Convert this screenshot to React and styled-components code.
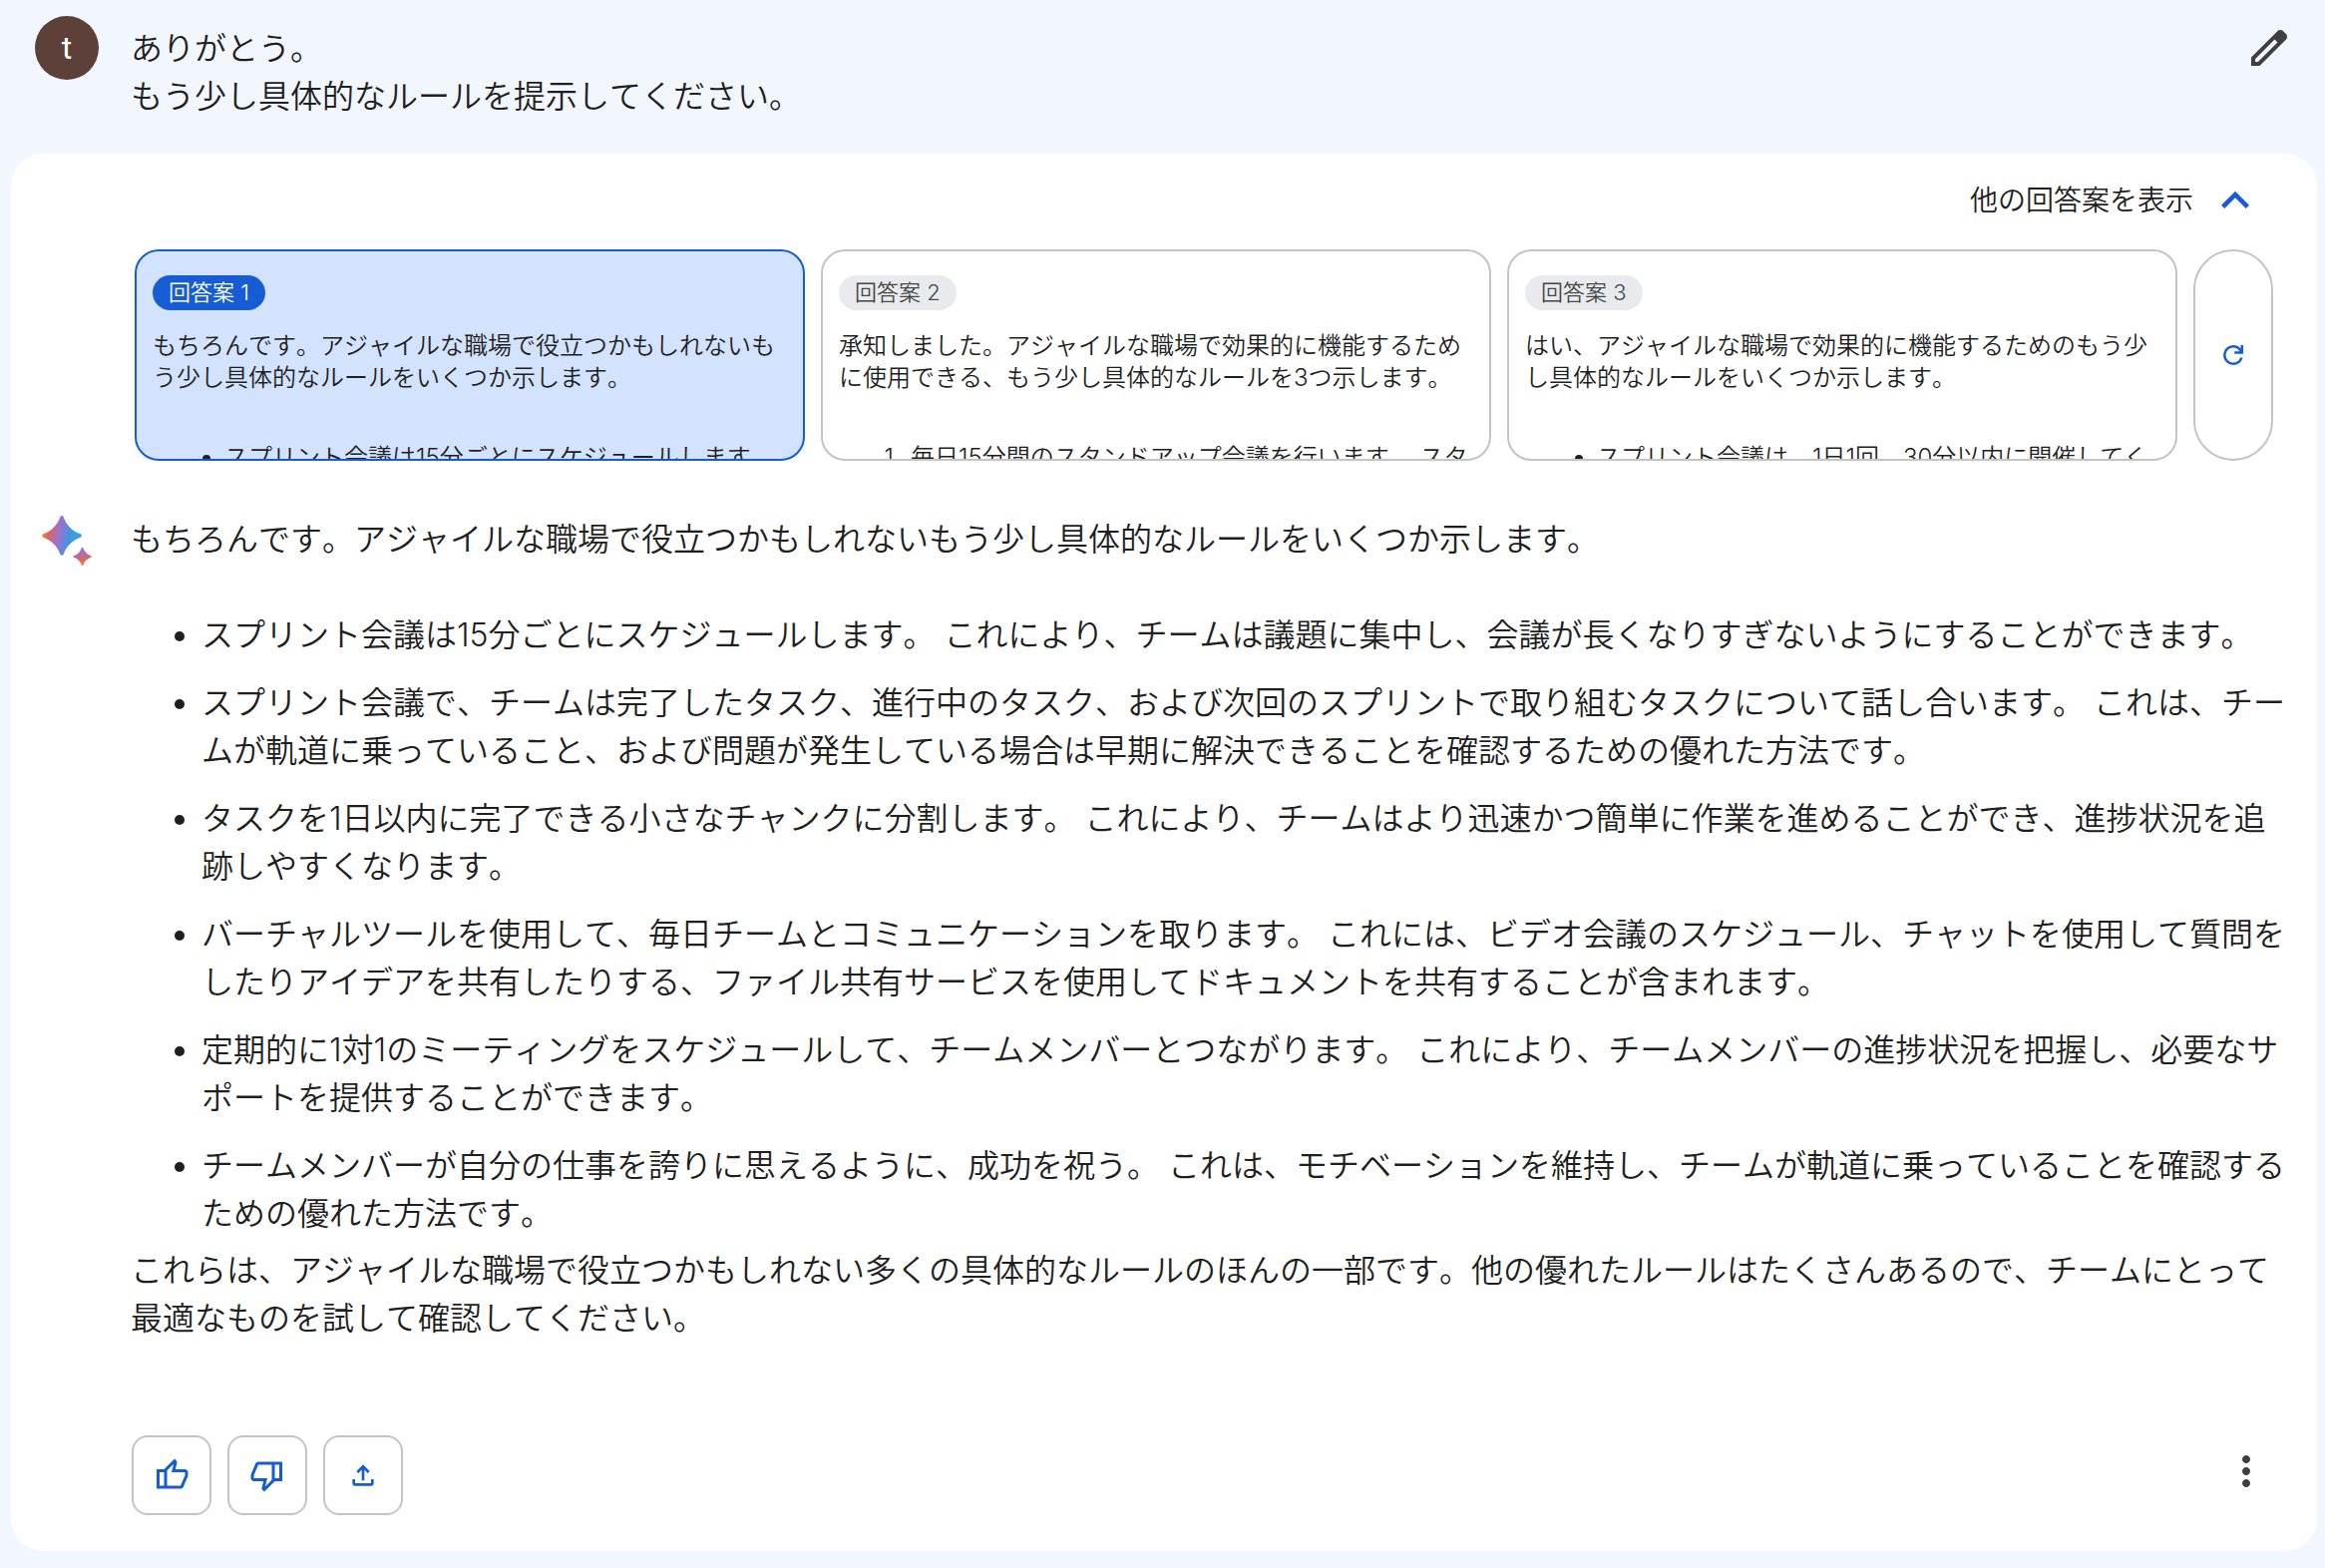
import { useState } from "react";
import styled, { createGlobalStyle } from "styled-components";

const drafts = [
  {
    id: 1,
    text: "もちろんです。アジャイルな職場で役立つかもしれないもう少し具体的なルールをいくつか示します。",
    item: "スプリント会議は15分ごとにスケジュールします。",
    marker: "disc"
  },
  {
    id: 2,
    text: "承知しました。アジャイルな職場で効果的に機能するために使用できる、もう少し具体的なルールを3つ示します。",
    item: "毎日15分間のスタンドアップ会議を行います。 スタンドアップ会議では進捗を共有します。",
    marker: "decimal"
  },
  {
    id: 3,
    text: "はい、アジャイルな職場で効果的に機能するためのもう少し具体的なルールをいくつか示します。",
    item: "スプリント会議は、1日1回、30分以内に開催してください。",
    marker: "disc"
  }
];

const rules = [
  "スプリント会議は15分ごとにスケジュールします。 これにより、チームは議題に集中し、会議が長くなりすぎないようにすることができます。",
  "スプリント会議で、チームは完了したタスク、進行中のタスク、および次回のスプリントで取り組むタスクについて話し合います。 これは、チームが軌道に乗っていること、および問題が発生している場合は早期に解決できることを確認するための優れた方法です。",
  "タスクを1日以内に完了できる小さなチャンクに分割します。 これにより、チームはより迅速かつ簡単に作業を進めることができ、進捗状況を追跡しやすくなります。",
  "バーチャルツールを使用して、毎日チームとコミュニケーションを取ります。 これには、ビデオ会議のスケジュール、チャットを使用して質問をしたりアイデアを共有したりする、ファイル共有サービスを使用してドキュメントを共有することが含まれます。",
  "定期的に1対1のミーティングをスケジュールして、チームメンバーとつながります。 これにより、チームメンバーの進捗状況を把握し、必要なサポートを提供することができます。",
  "チームメンバーが自分の仕事を誇りに思えるように、成功を祝う。 これは、モチベーションを維持し、チームが軌道に乗っていることを確認するための優れた方法です。"
];

const icons = {
  edit: "M200-200h57l391-391-57-57-391 391v57Zm-80 80v-170l528-527q12-11 26.5-17t30.5-6q16 0 31 6t26 18l55 56q12 11 17.5 26t5.5 30q0 16-5.5 30.5T817-647L290-120H120Z",
  up: "M480-528 296-344l-56-56 240-240 240 240-56 56-184-184Z",
  refresh: "M480-160q-134 0-227-93t-93-227q0-134 93-227t227-93q69 0 132 28.5T720-690v-110h80v280H520v-80h168q-32-56-87.5-88T480-720q-100 0-170 70t-70 170q0 100 70 170t170 70q77 0 139-44t87-116h84q-28 106-114 173t-196 67Z",
  like: "M720-120H280v-520l280-280 50 50q7 7 11.5 19t4.5 23v14l-44 174h258q32 0 56 24t24 56v80q0 7-2 15t-4 15L794-168q-9 20-30 34t-44 14Zm-360-80h360l120-280v-80H480l54-220-174 174v406Zm-80-440v80H160v360h120v80H80v-520h200Z",
  dislike: "M240-840h440v520L400-40l-50-50q-7-7-11.5-19t-4.5-23v-14l44-174H120q-32 0-56-24t-24-56v-80q0-7 2-15t4-15l120-282q9-20 30-34t44-14Zm360 80H240L120-480v80h360l-54 220 174-174v-406Zm80 440v-80h120v-360H680v-80h200v520H680Z",
  share: "M440-320v-326L336-542l-56-58 200-200 200 200-56 58-104-104v326h-80ZM240-160q-33 0-56.5-23.5T160-240v-120h80v120h480v-120h80v120q0 33-23.5 56.5T720-160H240Z",
  more: "M480-160q-33 0-56.5-23.5T400-240q0-33 23.5-56.5T480-320q33 0 56.5 23.5T560-240q0 33-23.5 56.5T480-160Zm0-240q-33 0-56.5-23.5T400-480q0-33 23.5-56.5T480-560q33 0 56.5 23.5T560-480q0 33-23.5 56.5T480-400Zm0-240q-33 0-56.5-23.5T400-720q0-33 23.5-56.5T480-800q33 0 56.5 23.5T560-720q0 33-23.5 56.5T480-640Z"
};

const star =
  "M18.3 1.2Q20-1 21.7 1.2C24.5 9.5 30.5 15.5 38.8 18.3Q41 20 38.8 21.7C30.5 24.5 24.5 30.5 21.7 38.8Q20 41 18.3 38.8C15.5 30.5 9.5 24.5 1.2 21.7Q-1 20 1.2 18.3C9.5 15.5 15.5 9.5 18.3 1.2Z";

function Icon({ name, size }) {
  return (
    <svg width={size} height={size} viewBox="0 -960 960 960" fill="currentColor" aria-hidden="true">
      <path d={icons[name]} />
    </svg>
  );
}

function Sparkle() {
  return (
    <svg width="50" height="50" viewBox="0 0 50 50" aria-hidden="true">
      <defs>
        <linearGradient id="big" x1="0" y1="0.42" x2="1" y2="0.58">
          <stop offset="0" stopColor="#f2903f" />
          <stop offset="0.16" stopColor="#dc6660" />
          <stop offset="0.42" stopColor="#9a72cc" />
          <stop offset="0.7" stopColor="#3f97e2" />
          <stop offset="1" stopColor="#35a3ea" />
        </linearGradient>
        <linearGradient id="small" x1="0.4" y1="0" x2="0.6" y2="1">
          <stop offset="0" stopColor="#8a78d8" />
          <stop offset="0.35" stopColor="#a96fb8" />
          <stop offset="0.65" stopColor="#dc6660" />
          <stop offset="1" stopColor="#f2903f" />
        </linearGradient>
      </defs>
      <path fill="url(#big)" d={star} />
      <path fill="url(#small)" d={star} transform="translate(31.4 31.8) scale(0.46)" />
    </svg>
  );
}

function App() {
  const [selected, setSelected] = useState(1);
  const [open, setOpen] = useState(true);

  return (
    <Page lang="ja">
      <GlobalStyle />
      <Query>
        <Avatar>t</Avatar>
        <QueryText>
          ありがとう。
          <br />
          もう少し具体的なルールを提示してください。
        </QueryText>
        <IconButton aria-label="テキストを編集">
          <Icon name="edit" size={48} />
        </IconButton>
      </Query>

      <Response>
        <DraftsHeader>
          <Toggle aria-expanded={open} onClick={() => setOpen(!open)}>
            他の回答案を表示
            <Icon name="up" size={56} />
          </Toggle>
        </DraftsHeader>

        {open && (
          <Drafts>
            {drafts.map((d) => (
              <Draft key={d.id} $active={d.id === selected} onClick={() => setSelected(d.id)}>
                <Chip $active={d.id === selected}>{`回答案 ${d.id}`}</Chip>
                <DraftText>{d.text}</DraftText>
                <DraftItem $marker={d.marker}>{d.item}</DraftItem>
              </Draft>
            ))}
            <Refresh aria-label="回答案を再生成">
              <Icon name="refresh" size={30} />
            </Refresh>
          </Drafts>
        )}

        <Answer>
          <Sparkle />
          <AnswerBody>
            <p>もちろんです。アジャイルな職場で役立つかもしれないもう少し具体的なルールをいくつか示します。</p>
            <Rules>
              {rules.map((r) => (
                <li key={r}>{r}</li>
              ))}
            </Rules>
            <p>これらは、アジャイルな職場で役立つかもしれない多くの具体的なルールのほんの一部です。他の優れたルールはたくさんあるので、チームにとって最適なものを試して確認してください。</p>
          </AnswerBody>
        </Answer>

        <Actions>
          <ActionButton aria-label="良い回答">
            <Icon name="like" size={36} />
          </ActionButton>
          <ActionButton aria-label="悪い回答">
            <Icon name="dislike" size={36} />
          </ActionButton>
          <ActionButton aria-label="共有">
            <Icon name="share" size={32} />
          </ActionButton>
          <More aria-label="その他">
            <Icon name="more" size={48} />
          </More>
        </Actions>
      </Response>
    </Page>
  );
}

const GlobalStyle = createGlobalStyle`
  * {
    box-sizing: border-box;
  }
  body {
    margin: 0;
    background-color: #f2f6fe;
    color: #1f1f1f;
    font-family: Inter, "Noto Sans CJK JP", sans-serif;
    font-size: 32px;
    font-weight: 350;
    font-kerning: none;
    line-height: 48px;
  }
  p {
    margin: 0;
  }
  button {
    padding: 0;
    border: none;
    background: none;
    color: inherit;
    font: inherit;
    font-kerning: none;
    cursor: pointer;
  }
  svg {
    display: block;
    flex-shrink: 0;
  }
`;

const Page = styled.main`
  padding: 0 8px 17px 11px;
`;

const Query = styled.section`
  display: flex;
  align-items: flex-start;
  padding: 16px 24px 33px 24px;
`;

const Avatar = styled.div`
  width: 64px;
  height: 64px;
  flex-shrink: 0;
  border-radius: 50%;
  background-color: #5d4037;
  color: #ffffff;
  font-family: Roboto, sans-serif;
  font-weight: 400;
  line-height: 64px;
  text-align: center;
`;

const QueryText = styled.p`
  flex: 1;
  padding: 9px 32px 0 32px;
`;

const IconButton = styled.button`
  margin-top: 8px;
  color: #3c4043;
`;

const Response = styled.section`
  padding: 19px 0 36px;
  border-radius: 32px;
  background-color: #ffffff;
`;

const DraftsHeader = styled.div`
  display: flex;
  justify-content: flex-end;
  padding-right: 54px;
`;

const Toggle = styled.button`
  display: flex;
  align-items: center;
  gap: 14px;
  font-size: 28px;
  svg {
    color: #155cd5;
  }
`;

const Drafts = styled.div`
  display: grid;
  grid-template-columns: repeat(3, minmax(0, 1fr)) 80px;
  gap: 16px;
  padding: 21px 44px 0 124px;
`;

const Draft = styled.button`
  display: flex;
  flex-direction: column;
  align-items: flex-start;
  height: 212px;
  padding: 24px 16px 0;
  overflow: hidden;
  border: 2px solid ${(props) => (props.$active ? "#155cd5" : "#c4c4c4")};
  border-radius: 24px;
  background-color: ${(props) => (props.$active ? "#d3e3fd" : "#ffffff")};
  font-size: 24px;
  line-height: 32px;
  text-align: left;
`;

const Chip = styled.span`
  flex-shrink: 0;
  padding: 0 16px;
  border-radius: 18px;
  background-color: ${(props) => (props.$active ? "#155cd5" : "#e8eaed")};
  color: ${(props) => (props.$active ? "#ffffff" : "#444746")};
  font-size: 22px;
  line-height: 35px;
`;

const DraftText = styled.span`
  margin-top: 20px;
`;

const DraftItem = styled.span`
  display: list-item;
  margin: 48px 0 0 72px;
  list-style-type: ${(props) => props.$marker};
`;

const Refresh = styled.button`
  display: flex;
  align-items: center;
  justify-content: center;
  border: 2px solid #c4c4c4;
  border-radius: 40px;
  color: #155cd5;
`;

const Answer = styled.div`
  display: flex;
  align-items: flex-start;
  gap: 39px;
  padding: 55px 28px 0 31px;
`;

const AnswerBody = styled.div`
  flex: 1;
`;

const Rules = styled.ul`
  display: flex;
  flex-direction: column;
  gap: 20px;
  margin: 48px 0 9px;
  padding-left: 71px;
`;

const Actions = styled.div`
  display: flex;
  align-items: center;
  gap: 16px;
  padding: 93px 47px 0 121px;
`;

const ActionButton = styled.button`
  display: flex;
  align-items: center;
  justify-content: center;
  width: 80px;
  height: 80px;
  border: 2px solid #c4c4c4;
  border-radius: 16px;
  color: #155cd5;
`;

const More = styled.button`
  margin: 0 0 8px auto;
  color: #3c4043;
`;

export default App;
